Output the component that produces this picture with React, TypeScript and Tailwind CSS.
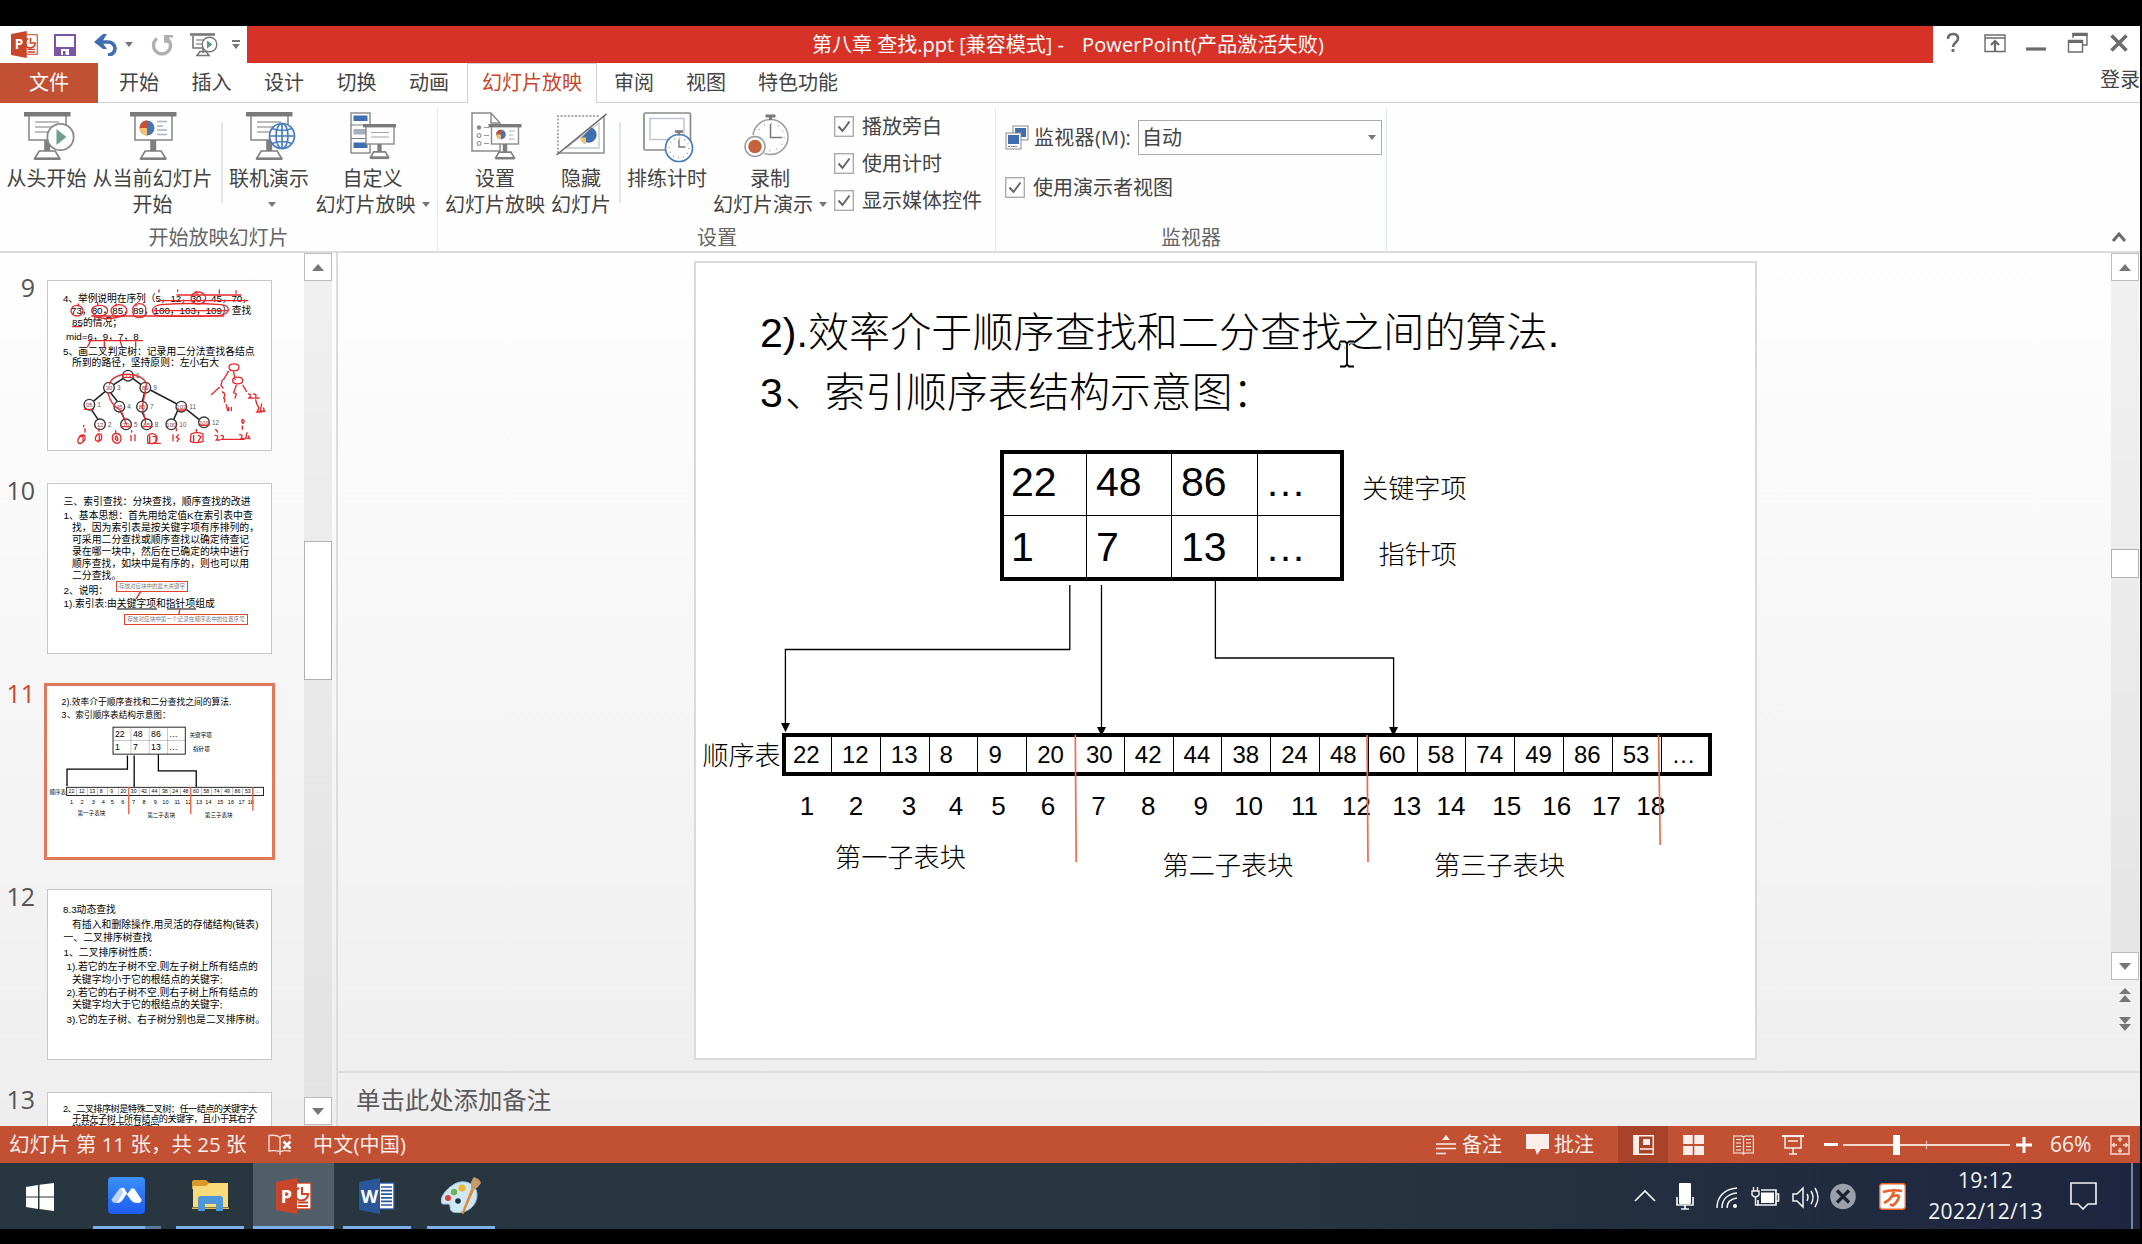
import React from "react";

const UI = "font-['Open_Sans','Noto_Sans_CJK_SC',sans-serif]";
const SLIDE = "font-['Liberation_Sans','Noto_Sans_CJK_SC',sans-serif]";

/* ---------- shared icon pieces ---------- */

function OfficeLogo({ kind, className }: { kind: "P" | "W"; className: string }) {
  const c = kind === "P" ? "#c8472a" : "#2b579a";
  return (
    <svg viewBox="0 0 36 36" preserveAspectRatio="none" className={className}>
      <rect x="18" y="5" width="17" height="26" fill="#fff" stroke={c} strokeWidth="1.4" />
      {kind === "P" ? (
        <g fill="none" stroke={c}>
          <path d="M26 9v7h6a6.500 6.500 0 1 1-9-6" strokeWidth="2.200" />
          <path d="M22 24.500h10M22 28h10" strokeWidth="1.800" />
        </g>
      ) : (
        <path d="M22 9h11M22 12.600h11M22 16.200h11M22 19.800h11M22 23.400h11M22 27h11" stroke={c} strokeWidth="1.700" />
      )}
      <path d="M0 4 21 0v36L0 32z" fill={c} />
      <text x="10.500" y="24.500" textAnchor="middle" fontSize="18" fontWeight="700" fill="#fff" fontFamily="Open Sans">
        {kind}
      </text>
    </svg>
  );
}

function Stand({ cx, y, s = 1 }: { cx: number; y: number; s?: number }) {
  return (
    <g>
      <rect x={cx - 3 * s} y={y} width={6 * s} height={11 * s} fill="#7f7f7f" />
      <path
        d={`M${cx - 8 * s} ${y + 11 * s}h${16 * s}l${4.500 * s} ${7.500 * s}h${-25 * s}z`}
        fill="#fff"
        stroke="#7f7f7f"
        strokeWidth="1.600"
      />
      <rect x={cx - 13 * s} y={y + 17.500 * s} width={26 * s} height="2.500" fill="#7f7f7f" />
    </g>
  );
}

function Board({ x, lines = true }: { x: number; lines?: boolean }) {
  return (
    <g>
      <rect x={x + 5} y="6" width="37" height="25" fill="#fff" stroke="#8a8a8a" strokeWidth="1.600" />
      <rect x={x} y="3" width="46.500" height="4.500" fill="#7a7a7a" />
      <Stand cx={x + 23.200} y={31} />
      {lines && <path d={`M${x + 11} 13h24M${x + 11} 18h20M${x + 11} 23h14`} stroke="#a6a6a6" strokeWidth="1.300" />}
    </g>
  );
}

function Pie({ cx, cy, r }: { cx: number; cy: number; r: number }) {
  return (
    <g>
      <circle cx={cx} cy={cy} r={r} fill="#4a74b4" />
      <path d={`M${cx} ${cy}V${cy - r}A${r} ${r} 0 0 0 ${cx - r} ${cy}z`} fill="#c8502f" />
      <path d={`M${cx} ${cy}H${cx - r}A${r} ${r} 0 0 0 ${cx} ${cy + r}z`} fill="#f0c36d" />
    </g>
  );
}

function RibbonIcon({ children }: { children: React.ReactNode }) {
  return (
    <svg viewBox="0 0 56 56" className="h-[56px] w-[56px] shrink-0">
      {children}
    </svg>
  );
}

const icons: Record<string, React.ReactNode> = {
  start: (
    <RibbonIcon>
      <Board x={5} />
      <circle cx="41.500" cy="28" r="13.200" fill="#fff" stroke="#8a8a8a" strokeWidth="1.800" />
      <path d="M37.500 20v16l10-8z" fill="#6fa08c" />
    </RibbonIcon>
  ),
  current: (
    <RibbonIcon>
      <Board x={5} lines={false} />
      <Pie cx={22} cy={19} r={7.500} />
      <path d="M32 12.500h10M32 17h6M32 21h10M32 25.500h10" stroke="#a9b3c2" strokeWidth="1.300" />
    </RibbonIcon>
  ),
  online: (
    <RibbonIcon>
      <Board x={5} />
      <g fill="#fff" stroke="#4a7cc0" strokeWidth="1.700">
        <circle cx="41" cy="27" r="12.500" />
        <ellipse cx="41" cy="27" rx="6" ry="12.500" fill="none" />
        <path d="M28.500 27h25M41 14.500v25M31 19.500q10 4 20 0M31 34.500q10-4 20 0" fill="none" />
      </g>
    </RibbonIcon>
  ),
  custom: (
    <RibbonIcon>
      <rect x="6" y="4" width="19" height="40" fill="#fff" stroke="#7f7f7f" strokeWidth="1.300" />
      <rect x="8.500" y="6.500" width="14" height="5.500" fill="#3f6fae" />
      <rect x="8.500" y="20" width="14" height="5.500" fill="#a7afb8" />
      <rect x="8.500" y="33.500" width="14" height="5.500" fill="#3f6fae" />
      <path d="M6 16h19M6 29.500h19" stroke="#7f7f7f" />
      <rect x="21" y="17" width="28" height="18" fill="#fff" stroke="#8a8a8a" strokeWidth="1.400" />
      <rect x="18" y="15" width="33" height="3.400" fill="#7a7a7a" />
      <path d="M26 23.500h18M26 28h18" stroke="#a6a6a6" strokeWidth="1.200" />
      <Stand cx={34.500} y={35} s={0.72} />
    </RibbonIcon>
  ),
  setup: (
    <RibbonIcon>
      <path d="M5 4h19l9 10v28H5z" fill="#fff" stroke="#8a8a8a" strokeWidth="1.500" />
      <path d="M24 4v10h9" fill="none" stroke="#8a8a8a" strokeWidth="1.500" />
      <circle cx="12" cy="18.500" r="2.200" fill="#8a8a8a" />
      <g fill="none" stroke="#9a9a9a" strokeWidth="1.200">
        <circle cx="12" cy="26.500" r="1.900" />
        <circle cx="12" cy="34.500" r="1.900" />
        <path d="M17 18.500h5M17 26.500h5M17 34.500h5" />
      </g>
      <rect x="24.500" y="17" width="27" height="18" fill="#fff" stroke="#8a8a8a" strokeWidth="1.400" />
      <rect x="21.500" y="15" width="33" height="3.400" fill="#7a7a7a" />
      <Pie cx={34} cy={25.500} r={4.800} />
      <path d="M42 22h6M42 26h4M42 30h6" stroke="#a9b3c2" strokeWidth="1.200" />
      <Stand cx={38} y={35} s={0.74} />
    </RibbonIcon>
  ),
  hide: (
    <RibbonIcon>
      <path d="M51 7v37H5" fill="none" stroke="#8f8f8f" strokeWidth="1.500" />
      <path d="M5 44V7h42" fill="none" stroke="#8a8a8a" strokeWidth="1.400" strokeDasharray="2 1.600" />
      <path d="M46 14v25H13z" fill="#fff" stroke="#c4c9d2" strokeWidth="1.300" />
      <path d="M38.500 18.500a7.800 7.800 0 1 1-10 10z" fill="#3f6fae" />
      <path d="M27 28.500h6v7q-5-1.500-6-7z" fill="#f0c36d" />
      <path d="M3.500 46 53.500 5" stroke="#666" strokeWidth="1.600" />
    </RibbonIcon>
  ),
  rehearse: (
    <RibbonIcon>
      <rect x="5" y="4" width="46.500" height="37" rx="1.500" fill="#fff" stroke="#8a8a8a" strokeWidth="1.700" />
      <rect x="11" y="9.500" width="34" height="21" fill="#fff" stroke="#b9c3d2" strokeWidth="1.400" />
      <circle cx="40" cy="39" r="13.500" fill="#fff" stroke="#4a7cc0" strokeWidth="1.700" />
      <circle cx="40" cy="39" r="9.800" fill="none" stroke="#9a9a9a" strokeWidth="1.400" strokeDasharray="1 4.130" />
      <path d="M40 30.500V38h6.500" fill="none" stroke="#7a7a7a" strokeWidth="1.400" />
      <path d="M36 22.500h8M40 22.500v4" stroke="#7a7a7a" strokeWidth="2.600" />
    </RibbonIcon>
  ),
  record: (
    <RibbonIcon>
      <circle cx="28.500" cy="28" r="17.500" fill="#fff" stroke="#a0a0a0" strokeWidth="1.600" />
      <circle cx="28.500" cy="28" r="13.500" fill="none" stroke="#9a9a9a" strokeWidth="1.400" strokeDasharray="1 6.070" />
      <path d="M28.500 15v13.500H40" fill="none" stroke="#7a7a7a" strokeWidth="1.500" />
      <path d="M23.500 7h10M28.500 7v4" stroke="#7a7a7a" strokeWidth="3" />
      <circle cx="13" cy="37.500" r="11.500" fill="#fff" />
      <circle cx="13" cy="37.500" r="10" fill="#fff" stroke="#9a9a9a" strokeWidth="1.500" />
      <circle cx="13" cy="37.500" r="6.800" fill="#c4623f" />
    </RibbonIcon>
  ),
};

function Caret({ className = "" }: { className?: string }) {
  return <span className={`h-0 w-0 border-x-[4px] border-t-[5px] border-x-transparent border-t-[#777] ${className}`} />;
}

function BigButton({ icon, l1, l2, caret, className }: { icon: string; l1: string; l2?: string; caret?: boolean; className: string }) {
  return (
    <div className={`flex shrink-0 flex-col items-center pt-[1px] text-[20px] leading-[25px] whitespace-nowrap text-[#444] ${className}`}>
      {icons[icon]}
      <span className="mt-[1px]">{l1}</span>
      <span className="mt-[1px] flex h-[25px] items-center gap-[6px]">
        {l2}
        {caret && <Caret className={l2 ? "" : "ml-[6px]"} />}
      </span>
    </div>
  );
}

function Check({ label, className = "" }: { label: string; className?: string }) {
  return (
    <div className={`flex h-[37px] items-center gap-[8px] text-[20px] whitespace-nowrap text-[#444] ${className}`}>
      <svg viewBox="0 0 20 21" className="h-[21px] w-[20px]">
        <rect x=".7" y=".7" width="18.600" height="19.600" fill="#fff" stroke="#ababab" strokeWidth="1.400" />
        <path d="M4.500 10.500 8.500 15 15.500 5.500" fill="none" stroke="#666" strokeWidth="2" />
      </svg>
      {label}
    </div>
  );
}

/* ---------- title bar, tabs, ribbon ---------- */

function TitleBar() {
  return (
    <div className="flex h-[37px] shrink-0 bg-white">
      <div className="flex w-[247px] items-center pl-[11px]">
        <OfficeLogo kind="P" className="h-[27px] w-[27px]" />
        <svg viewBox="0 0 22 22" className="ml-[16px] h-[22px] w-[22px]">
          <rect x="1" y="1" width="20" height="20" fill="#fff" stroke="#7d55a8" strokeWidth="2" />
          <path d="M1 13h20v8H1z" fill="#7d55a8" />
          <path d="M7 15h8v6H7z" fill="#fff" />
          <path d="M9 17h2.500v4H9z" fill="#7d55a8" />
        </svg>
        <svg viewBox="0 0 24 22" className="ml-[18px] h-[22px] w-[24px]">
          <path d="M3 8h11a7 6.500 0 0 1 0 13" fill="none" stroke="#3f6fae" strokeWidth="3.600" />
          <path d="M0 8 9 0h4L8 8l5 7H9z" fill="#3f6fae" />
        </svg>
        <Caret className="ml-[7px]" />
        <svg viewBox="0 0 24 24" className="ml-[17px] h-[24px] w-[24px]">
          <path d="M7 5.500a8.500 8.500 0 1 0 10 0" fill="none" stroke="#b0b0b0" strokeWidth="3.400" />
          <path d="M14 2h9v2.500h-4l1 6-6-1z" fill="#b0b0b0" />
        </svg>
        <svg viewBox="0 0 28 24" className="ml-[16px] h-[24px] w-[28px]">
          <path d="M0 1.500h25" stroke="#777" strokeWidth="2.600" />
          <path d="M3 3v12h10M13 15v5M7 22.500h12l-3-4h-6z" fill="none" stroke="#777" strokeWidth="1.600" />
          <path d="M6 7h10M6 11h6" stroke="#999" strokeWidth="1.300" />
          <circle cx="19.500" cy="11.500" r="7.300" fill="#fff" stroke="#777" strokeWidth="1.400" />
          <path d="M17 7.500v8l5.500-4z" fill="#5a9a80" />
        </svg>
        <span className="ml-[14px] flex flex-col items-center gap-[2px]">
          <span className="h-[2px] w-[8px] bg-[#777]" />
          <Caret />
        </span>
      </div>
      <div className="flex w-[1686px] items-center bg-[#d73227] pl-[565px] text-[20px] whitespace-pre text-white">
        <span>第八章 查找.ppt [兼容模式] -</span>
        <span className="ml-[18px] tracking-[0.150px]">PowerPoint(产品激活失败)</span>
      </div>
      <svg viewBox="0 0 207 37" className="h-[37px] w-[207px]">
        <g fill="none" stroke="#6b6b6b">
          <path d="M15 13q0-5 5-5t5 4.500c0 4-5 4-5 8.500" strokeWidth="2.600" />
          <path d="M20 23v3" strokeWidth="2.800" />
          <path d="M52 9h20v16.500H52zM52 12h20" strokeWidth="1.400" />
          <path d="M62 25V15M58 19l4-4 4 4" strokeWidth="2.200" />
          <path d="M93 23h20" strokeWidth="3.200" />
          <path d="M140 12V7.500h14V19h-4" strokeWidth="1.400" />
          <path d="M139.500 8.500h15" strokeWidth="3" />
          <path d="M135.500 14.500h14V26h-14z" strokeWidth="1.400" />
          <path d="M135 15.500h15" strokeWidth="3" />
          <path d="M178.500 9.500l15 15M193.500 9.500l-15 15" strokeWidth="3.600" />
        </g>
      </svg>
    </div>
  );
}

function Tabs() {
  return (
    <div className="flex h-[40px] shrink-0 border-b border-[#d2d2d2] bg-white text-[20px] leading-[40px] whitespace-nowrap text-[#444]">
      <div className="h-[40px] w-[98px] bg-[#c25033] text-center text-white">文件</div>
      <div className="ml-[21px] flex gap-[32.500px]">
        <span>开始</span>
        <span>插入</span>
        <span>设计</span>
        <span>切换</span>
        <span>动画</span>
      </div>
      <div className="ml-[18px] h-[40px] w-[130px] border-x border-t border-[#d2d2d2] bg-white text-center leading-[38px] text-[#c8472a]">幻灯片放映</div>
      <div className="ml-[17px] flex gap-[32px]">
        <span>审阅</span>
        <span>视图</span>
        <span>特色功能</span>
      </div>
      <span className="ml-auto leading-[33px]">登录</span>
    </div>
  );
}

function Group({ label, className, children }: { label: string; className: string; children: React.ReactNode }) {
  return (
    <div className={`relative flex h-[143px] shrink-0 flex-col border-r border-[#e1e6ee] ${className}`}>
      <div className="flex h-[116px]">{children}</div>
      <div className="h-[27px] text-center text-[20px] leading-[27px] text-[#666]">{label}</div>
    </div>
  );
}

function Ribbon() {
  return (
    <div className="flex h-[150px] shrink-0 border-b-2 border-[#dcdcdc] bg-[#fefefe] pt-[5px]">
      <Group label="开始放映幻灯片" className="w-[438px]">
        <BigButton icon="start" l1="从头开始" className="ml-[6px] w-[81px]" />
        <BigButton icon="current" l1="从当前幻灯片" l2="开始" className="ml-[5px] w-[121px]" />
        <div className="mt-[14px] ml-[8px] h-[81px] w-[2px] bg-[#e1e6ee]" />
        <BigButton icon="online" l1="联机演示" caret className="ml-[6px] w-[80px]" />
        <BigButton icon="custom" l1="自定义" l2="幻灯片放映" caret className="ml-[7px] w-[113px]" />
      </Group>
      <Group label="" className="w-[558px]">
        <BigButton icon="setup" l1="设置" l2="幻灯片放映" className="ml-[7px] w-[100px]" />
        <BigButton icon="hide" l1="隐藏" l2="幻灯片" className="ml-[6px] w-[60px]" />
        <div className="mt-[14px] ml-[8px] h-[81px] w-[2px] bg-[#e1e6ee]" />
        <BigButton icon="rehearse" l1="排练计时" className="ml-[6px] w-[80px]" />
        <BigButton icon="record" l1="录制" l2="幻灯片演示" caret className="ml-[6px] w-[114px]" />
        <div className="ml-[7px] flex flex-col">
          <Check label="播放旁白" />
          <Check label="使用计时" />
          <Check label="显示媒体控件" />
        </div>
        <span className="absolute bottom-0 left-[259px] text-[20px] leading-[27px] text-[#666]">设置</span>
      </Group>
      <Group label="监视器" className="w-[391px]">
        <div className="flex flex-col pl-[9px] text-[20px] text-[#444]">
          <div className="mt-[11px] flex h-[37px] items-center">
            <svg viewBox="0 0 24 25" className="h-[25px] w-[24px]">
              <rect x="8" y="1" width="15" height="14" fill="#fff" stroke="#8a8a8a" />
              <rect x="10" y="3" width="11" height="9" fill="#3f6fae" />
              <rect x="1" y="8" width="15" height="16" fill="#fff" stroke="#8a8a8a" />
              <rect x="3" y="10" width="11" height="9" fill="#3f6fae" />
              <path d="M3 21.500h2" stroke="#c8472a" />
              <path d="M6 21.500h6" stroke="#888" />
            </svg>
            <span className="ml-[5px] w-[104px] tracking-[0.300px] whitespace-nowrap">监视器(M):</span>
            <div className="flex h-[35px] w-[244px] items-center justify-between border border-[#ababab] bg-white pr-[5px] pl-[3px]">
              自动
              <Caret />
            </div>
          </div>
          <Check label="使用演示者视图" className="mt-[13px]" />
        </div>
      </Group>
      <svg viewBox="0 0 16 12" className="mt-[123px] mr-[13px] ml-auto h-[12px] w-[16px]">
        <path d="M2 10l6-7 6 7" fill="none" stroke="#6b6b6b" strokeWidth="3" />
      </svg>
    </div>
  );
}

/* ---------- slides ---------- */

type Item = { x: number; y: number; s: number; t: string; ls?: number };

/* Places one run of slide text; y is the vertical centre of the run. */
function Run({ x, y, s, t, ls = 0 }: Item) {
  return (
    <span
      className="absolute leading-none whitespace-pre"
      style={{ left: x, top: y - s / 2, fontSize: s, letterSpacing: ls }}
    >
      {t}
    </span>
  );
}

const seq = ["22", "12", "13", "8", "9", "20", "30", "42", "44", "38", "24", "48", "60", "58", "74", "49", "86", "53", "…"];
const idx = [111, 160, 213, 260, 302.5, 352, 402.4, 452.3, 504.7, 552.6, 608.6, 660.4, 710.8, 755, 810.8, 860.8, 910.4, 954.7];
const labels: Item[] = [
  { x: 666, y: 226, s: 26.2, t: "关键字项" },
  { x: 682.5, y: 292.5, s: 26.2, t: "指针项" },
  { x: 6.5, y: 493, s: 26, t: "顺序表" },
  { x: 139, y: 595.5, s: 26.2, t: "第一子表块" },
  { x: 466.5, y: 603.5, s: 26.2, t: "第二子表块" },
  { x: 738, y: 603.5, s: 26.2, t: "第三子表块" },
];

function IndexSlide({ heavy }: { heavy?: boolean }) {
  const w = heavy ? 6 : 1.3;
  return (
    <div className={`relative h-[796px] w-[1060px] bg-white text-black ${heavy ? "font-normal" : "font-light"} ${SLIDE}`}>
      <Run x={64} y={70.500} s={41} t="2)." />
      <Run x={112} y={70.500} s={41.100} t="效率介于顺序查找和二分查找之间的算法." />
      <Run x={64} y={130.500} s={41} t="3" />
      <Run x={89} y={130.500} s={40.7} t="、" />
      <Run x={128.500} y={130.500} s={40.8} t="索引顺序表结构示意图：" />

      <div className="absolute top-[187px] left-[304px] grid h-[131px] w-[344px] grid-cols-[83px_85px_86px_82px] grid-rows-[62px_61px] border-4 border-black text-[41px] leading-[57px]">
        {["22", "48", "86", "…", "1", "7", "13", "…"].map((t, i) => (
          <div
            key={i}
            className={`${i % 4 === 3 ? "pl-[7px]" : i % 4 === 0 ? "border-r-[1.500px] border-r-black pl-[7px]" : "border-r-[1.500px] border-r-black pl-[9px]"} ${i < 4 ? "border-b-[1.500px] border-b-black" : "pt-[3px]"}`}
          >
            {t}
          </div>
        ))}
      </div>

      <div className="absolute top-[470px] left-[86px] flex h-[43px] w-[930px] border-4 border-black text-[24px] leading-[36px]">
        {seq.map((t, i) => (
          <div
            key={i}
            className={i === 0 ? "w-[45px] shrink-0 pl-[7px]" : "w-[48.800px] shrink-0 border-l-[1.500px] border-black pl-[10px]"}
          >
            {t}
          </div>
        ))}
      </div>

      {idx.map((c, i) => (
        <span
          key={i}
          className="absolute top-[530px] w-[40px] text-center text-[26px] leading-[26px]"
          style={{ left: c - 20 }}
        >
          {i + 1}
        </span>
      ))}
      {labels.map((l) => (
        <Run key={l.t} {...l} />
      ))}

      <svg viewBox="0 0 1060 796" className="absolute inset-0 h-[796px] w-[1060px]">
        <g fill="none" stroke="#000" strokeWidth={w}>
          <path d="M373.800 322V386.500H89.400V462M405.500 322V466M519.400 318V395H697.600V466" />
        </g>
        <path d="M85 460h9l-4.500 9zM401 464h9l-4.500 9zM693 464h9l-4.500 9z" />
        <path d="M379.300 472l.9 127M671 472l1 127M962.600 472l1.600 110" stroke="#ee6c4d" strokeWidth={heavy ? 7 : 1.700} fill="none" />
      </svg>
    </div>
  );
}

const s9: Item[] = [
  { x: 15, y: 17.5, s: 9.8, t: "4、举例说明在序列（5，12，30，45，70，", ls: -0.12 },
  { x: 23, y: 29.5, s: 9.8, t: "73，80，85，89，100，103，109）查找", ls: -0.02 },
  { x: 24, y: 41.5, s: 9.8, t: "85的情况；" },
  { x: 18, y: 56, s: 9.8, t: "mid=6，9，7，8" },
  { x: 15, y: 70.5, s: 9.8, t: "5、画二叉判定树：记录用二分法查找各结点" },
  { x: 24, y: 81.5, s: 9.8, t: "所到的路径，坚持原则：左小右大" },
];
const s10: Item[] = [
  { x: 15.5, y: 17.5, s: 9.85, t: "三、索引查找：分块查找，顺序查找的改进" },
  { x: 15.5, y: 32, s: 9.85, t: "1、基本思想：首先用给定值K在索引表中查" },
  { x: 24, y: 44, s: 9.85, t: "找，因为索引表是按关键字项有序排列的，" },
  { x: 24, y: 55.5, s: 9.85, t: "可采用二分查找或顺序查找以确定待查记" },
  { x: 24, y: 68, s: 9.85, t: "录在哪一块中，然后在已确定的块中进行" },
  { x: 24, y: 80, s: 9.85, t: "顺序查找，如块中是有序的，则也可以用" },
  { x: 24, y: 92, s: 9.85, t: "二分查找。" },
  { x: 15.5, y: 106.5, s: 9.8, t: "2、说明：" },
  { x: 15.5, y: 120, s: 9.8, t: "1).索引表:由关键字项和指针项组成" },
];
const s12: Item[] = [
  { x: 15, y: 20, s: 9.8, t: "8.3动态查找" },
  { x: 24, y: 34.5, s: 9.85, t: "有插入和删除操作,用灵活的存储结构(链表)" },
  { x: 15.5, y: 48, s: 9.85, t: "一、二叉排序树查找" },
  { x: 15.5, y: 62.5, s: 9.85, t: "1、二叉排序树性质：" },
  { x: 18.5, y: 77, s: 9.85, t: "1).若它的左子树不空,则左子树上所有结点的" },
  { x: 24, y: 89.5, s: 9.85, t: "关键字均小于它的根结点的关键字;" },
  { x: 18.5, y: 102.5, s: 9.85, t: "2).若它的右子树不空,则右子树上所有结点的" },
  { x: 24, y: 115, s: 9.85, t: "关键字均大于它的根结点的关键字;" },
  { x: 18.5, y: 129.5, s: 9.85, t: "3).它的左子树、右子树分别也是二叉排序树。" },
];
const s13: Item[] = [
  { x: 15, y: 16.5, s: 9.2, t: "2、二叉排序树是特殊二叉树：任一结点的关键字大", ls: -0.58 },
  { x: 24, y: 26.5, s: 9.2, t: "于其左子树上所有结点的关键字，且小于其右子", ls: -0.5 },
  { x: 24, y: 36, s: 9.2, t: "树的所有结点的关键字。", ls: -0.5 },
];

const nodes: [number, number, number, string][] = [
  [381, 375, 6, "73"], [324, 411, 3, "30"], [433, 411, 9, "89"], [265, 462, 1, "05"], [355, 468, 4, "45"], [423, 468, 7, "80"],
  [541, 468, 11, "103"], [297, 521, 2, "12"], [375, 521, 5, "70"], [437, 521, 8, "85"], [511, 521, 10, "100"], [609, 515, 12, "109"],
];

function TreeInk() {
  return (
    <svg viewBox="141 91 675 510" className="absolute inset-0 h-[170px] w-[225px]">
      <path
        d="M367 383 338 402M395 383 420 402M312 423 277 452M448 418 528 460M272 478 291 506M330 428 349 452M360 484 370 505M430 428 424 452M424 486 433 505M530 480 518 506M556 476 594 506"
        stroke="#222" strokeWidth="4.500"
      />
      {nodes.map(([x, y, n, t]) => (
        <g key={n}>
          <circle cx={x} cy={y} r="16" fill="#fff" stroke="#333" strokeWidth="4" />
          <text x={x} y={y + 7} fontSize="18" textAnchor="middle" fill="#a33" fontFamily="Liberation Sans">{t}</text>
          <text x={x + 24} y={y + 7} fontSize="19" fill="#555" fontFamily="Liberation Sans">{n}</text>
        </g>
      ))}
      <g fill="none" stroke="#e8292b" strokeWidth="4" strokeLinecap="round">
        <path d="M472 150H740M272 196H668M460 180H680M215 228h26M262 270H424M528 133H720" />
        <path d="M210 180a18 16 0 1 0 36 0a18 16 0 1 0-36 0M272 180a24 16 0 1 0 48 0a24 16 0 1 0-48 0M330 180a24 18 0 1 0 48 0a24 18 0 1 0-48 0M396 180a20 16 0 1 0 38 0a20 16 0 1 0-38 0M570 142a22 18 0 1 0 44 0a22 18 0 1 0-44 0" />
        <path d="M480 162c-34 4-34 34 0 34 60 2 120 2 176-2 34-6 34-28 4-32-50-4-130-4-180 0M280 198q50 14 90-6" />
        <path d="M474 118v6M530 118v4M585 122l4 8M655 118v10M705 120v8M232 160v6M290 156v8M345 160v6M405 160v6" />
        <path d="M268 272l-8 16M310 274v14M358 272l4 14M404 274v14" />
        <path d="M326 400c10-40 100-38 110 0l-12 70 10 46M320 425q10 40 40 55l16 40M365 380h30M250 476h28M530 478h24M362 528h26M428 528h26M600 524h24" />
        <path d="M684 350c0-14 30-14 30 0s-30 14-30 0M682 362l-14 24M698 364l4 22M695 390c0-14 30-14 30 0s-30 12-30 0M664 388l-4 16 6 8M655 410l-24 22M664 424q12 4 4 18 6 2 2 12M706 404l-8 22 8 4-4 12M726 404l10 18M742 430q12 0 2 12h12M758 430q12 0 4 12h12M764 448l4 14M768 462q10 8 0 22h14M782 460l-4 20 12 2-2-10M676 462l4 18M683 470v10M691 470v10" />
        <path d="M236 556c20-12 22 12 4 22-16 4-10-22 4-22M248 524v4M252 534v10M246 556v16M290 550q10 4 2 24M284 560c-6 14 16 16 18 0s-16-12-18 0M294 534v8M334 560c0-16 26-16 26 4s-26 18-26-4M344 540v8M346 556q-8 8 2 14 6-4-2-14M392 540v4M390 554v16M402 552v18M440 556c8-12 28-8 28 8s-26 20-28 8v-16M446 556v18M456 558l10 0-2 16M440 578h38M526 534v6M516 552v18M532 552l-6 8 8 4-6 8M570 550q20-8 36 0v22q-20 8-38 0l2-22M578 554v18M592 554l8 4-8 14M586 536v8M642 554q14 0 4 14h10M660 554q12 0 4 12h12M644 536l6 8M660 566h70M716 552q12 0 4 12h10M738 546l-4 16 12 2-4-8M724 506q10 4 2 12-6-4-2-12M724 526v10" />
      </g>
    </svg>
  );
}

function Thumb({ n, children, active }: { n: number; children: React.ReactNode; active?: boolean }) {
  return (
    <div className="flex h-[170.500px] shrink-0">
      <span className={`w-[36px] shrink-0 pr-px text-right text-[25px] leading-[14px] ${active ? "text-[#c8472a]" : "text-[#555]"}`}>{n}</span>
      <div
        className={`relative ml-[11px] h-[170.500px] w-[225px] shrink-0 overflow-hidden bg-white text-black ${SLIDE} ${
          active ? "outline-3 outline-[#e0795c]" : "border border-[#c6c6c6]"
        }`}
      >
        {children}
      </div>
    </div>
  );
}

function ArrowButton({ up }: { up?: boolean }) {
  return (
    <div className="flex h-[28px] w-full shrink-0 items-center justify-center border border-[#bcbcbc] bg-white">
      {up ? (
        <span className="h-0 w-0 border-x-[6px] border-b-[7px] border-x-transparent border-b-[#777]" />
      ) : (
        <span className="h-0 w-0 border-x-[6px] border-t-[7px] border-x-transparent border-t-[#777]" />
      )}
    </div>
  );
}

function ThumbPane() {
  return (
    <div className="flex w-[338px] shrink-0 border-r-2 border-[#dcdcdc]">
      <div className="flex w-[304px] flex-col gap-[32.500px] overflow-hidden pt-[27px]">
        <Thumb n={9}>
          {s9.map((l) => <Run key={l.t} {...l} />)}
          <TreeInk />
        </Thumb>
        <Thumb n={10}>
          {s10.map((l) => <Run key={l.t} {...l} />)}
          <svg viewBox="0 0 225 170" className="absolute inset-0 h-[170px] w-[225px]">
            <path d="M69 125h40M119 125h29" stroke="#000" />
            <path d="M93 107l-5 8M132 124l-1 6" stroke="#e0452f" strokeWidth="1.500" />
          </svg>
          <div className="absolute top-[97px] left-[68px] flex h-[11px] w-[72px] items-center justify-center border border-[#e0452f] text-[5.500px] whitespace-nowrap text-[#777]">
            存放对应块中的最大关键字
          </div>
          <div className="absolute top-[130px] left-[76px] flex h-[11px] w-[124px] items-center justify-center border border-[#e0452f] text-[5.600px] whitespace-nowrap text-[#777]">
            存放对应块中第一个记录在顺序表中的位置序号
          </div>
        </Thumb>
        <Thumb n={11} active>
          <div className="mt-px ml-px h-[796px] w-[1060px] origin-top-left scale-[0.2125]">
            <IndexSlide heavy />
          </div>
        </Thumb>
        <Thumb n={12}>{s12.map((l) => <Run key={l.t} {...l} />)}</Thumb>
        <Thumb n={13}>{s13.map((l) => <Run key={l.t} {...l} />)}</Thumb>
      </div>
      <div className="flex w-[28px] flex-col justify-between bg-gradient-to-b from-[#f0f0f0] to-[#e2e2e2] pb-px">
        <ArrowButton up />
        <div className="mb-[157px] h-[139px] border border-[#b0b0b0] bg-white" />
        <ArrowButton />
      </div>
    </div>
  );
}

function Editor() {
  return (
    <div className="flex min-w-0 flex-1 flex-col">
      <div className="flex h-[818px] shrink-0">
        <div className="relative flex-1 pt-[8px] pl-[356px]">
          <div className="h-[799px] w-[1063px] overflow-hidden border-2 border-[#dadada]">
            <IndexSlide />
          </div>
          <svg viewBox="0 0 16 28" className="absolute top-[87px] left-[1001px] h-[28px] w-[16px]">
            <path d="M1 1.500h5l2 2 2-2h5M8 3v22M1 26.500h5l2-2 2 2h5" fill="none" stroke="#fff" strokeWidth="4" />
            <path d="M1 1.500h5l2 2 2-2h5M8 3v22M1 26.500h5l2-2 2 2h5" fill="none" stroke="#000" strokeWidth="1.800" />
          </svg>
        </div>
        <div className="mr-px flex w-[28px] flex-col">
          <div className="flex h-[699px] flex-col bg-gradient-to-b from-[#f1f1f1] to-[#e5e5e5]">
            <ArrowButton up />
            <div className="mt-[268px] h-[29px] border border-[#b0b0b0] bg-white" />
          </div>
          <ArrowButton />
          <svg viewBox="0 0 28 60" className="h-[60px] w-[28px]" fill="#777">
            <path d="M14 8l6 6H8zM14 15l6 7H8zM8 37h12l-6 7zM8 44h12l-6 7z" />
          </svg>
        </div>
      </div>
      <div className="flex-1 border-t-2 border-[#dcdcdc] pl-[18px] text-[24.400px] leading-[53px] text-[#595959]">单击此处添加备注</div>
    </div>
  );
}

/* ---------- status bar & taskbar ---------- */

function StatusBar() {
  return (
    <div className="flex h-[37px] shrink-0 items-center bg-[#c25033] pl-[9px] text-[20px] whitespace-nowrap text-[#fbeeea]">
      <span className="w-[259px] text-[20.500px]">幻灯片 第 11 张，共 25 张</span>
      <svg viewBox="0 0 24 21" className="h-[21px] w-[24px]">
        <path d="M12 18q-3-2-11-1V1.500q8-1 11 2 3-3 10-2V5M12 3.500V21M22 16v1q-6-1-10 1" fill="none" stroke="#f7d9d0" strokeWidth="1.400" />
        <path d="M15.500 7.500l7 7M22.500 7.500l-7 7" stroke="#fff" strokeWidth="2.600" />
      </svg>
      <span className="ml-[21px] tracking-[0.200px]">中文(中国)</span>
      <svg viewBox="0 0 20 20" className="ml-auto h-[20px] w-[20px]" stroke="#fbeeea" strokeWidth="1.600">
        <path d="M0 9h20M0 13.500h20M0 18.500h10" />
        <path d="M10 0l4 5H6z" fill="#fbeeea" stroke="none" />
      </svg>
      <span className="ml-[6px]">备注</span>
      <svg viewBox="0 0 23 21" className="ml-[24px] h-[21px] w-[23px]" fill="#fbeeea">
        <path d="M0 0h23v15h-8l-4 6-2-6H0z" />
      </svg>
      <span className="ml-[5px]">批注</span>
      <div className="ml-[24px] flex h-[37px] w-[50px] items-center justify-center bg-[#a84228]">
        <svg viewBox="0 0 21 20" className="h-[20px] w-[21px]">
          <path d="M.7.700h19.600v18.600H.7zM7 14h13" fill="none" stroke="#fbeeea" strokeWidth="1.500" />
          <path d="M0 0h6v20H0zM10 4h7v6h-7z" fill="#fbeeea" />
        </svg>
      </div>
      <svg viewBox="0 0 21 20" className="ml-[15px] h-[20px] w-[21px]" fill="#fbeeea">
        <path d="M0 0h9.700v9H0zM11.300 0H21v9h-9.700zM0 11h9.700v9H0zM11.300 11H21v9h-9.700z" />
      </svg>
      <svg viewBox="0 0 21 20" className="ml-[29px] h-[20px] w-[21px]" fill="none" stroke="#fbeeea" strokeWidth="1.200">
        <path d="M.6 1H9l1.500 1L12 1h8.400v17H12l-1.500 1L9 18H.6zM10.500 2v18" />
        <path d="M3 4.500h5M3 8h5M3 11.500h5M3 15h5M13 4.500h5M13 8h5M13 11.500h5M13 15h5" />
      </svg>
      <svg viewBox="0 0 22 20" className="ml-[28px] h-[20px] w-[22px]" fill="none" stroke="#fbeeea" strokeWidth="1.500">
        <path d="M0 1h22" strokeWidth="2.200" />
        <path d="M3 1v12h16V1M6 6h10M11 13v6M7 19h8" />
      </svg>
      <span className="ml-[20px] h-[3px] w-[14px] bg-[#fff]" />
      <div className="relative ml-[5px] h-[20px] w-[167px]">
        <div className="mt-[9px] h-[2px] bg-[#f7d9d0]" />
        <div className="absolute top-0 left-[50px] h-[20px] w-[7px] bg-white" />
        <div className="absolute top-[6px] left-[83px] h-[8px] w-px bg-[#f7d9d0]" />
      </div>
      <svg viewBox="0 0 16 16" className="ml-[6px] h-[16px] w-[16px]" stroke="#fff" strokeWidth="3">
        <path d="M0 8h16M8 0v16" />
      </svg>
      <span className="ml-[18px] w-[60px] text-[21px]">66%</span>
      <svg viewBox="0 0 20 20" className="mr-[10px] h-[20px] w-[20px]" fill="none" stroke="#f7d9d0" strokeWidth="1.400">
        <path d="M1 1h18v18H1zM10 2v5M10 13v5M2 10h5M13 10h5M8 5l2-2 2 2M8 15l2 2 2-2M4.500 8l-2 2 2 2M15.500 8l2 2-2 2" />
      </svg>
    </div>
  );
}

function Task({ className, bar, children }: { className: string; bar: string; children: React.ReactNode }) {
  return (
    <div className={`flex h-[66px] shrink-0 flex-col items-center ${className}`}>
      <div className="flex flex-1 items-center pt-[2px]">{children}</div>
      <div className={`h-[3px] ${bar}`} />
    </div>
  );
}

function Taskbar() {
  return (
    <div className="flex h-[66px] shrink-0 bg-gradient-to-r from-[#28373f] via-[#27363f] via-60% to-[#1e2540]">
      <svg viewBox="0 0 28 28" className="mt-[20px] ml-[26px] h-[28px] w-[28px]" fill="#fff">
        <path d="M0 4l12-2v11.400H0zM13.500 1.700 28 0v13.400H13.500zM0 14.600h12V26L0 24zM13.500 14.600H28V28l-14.500-2z" />
      </svg>
      <Task className="ml-[39px] w-[68px]" bar="w-[68px] bg-gradient-to-r from-[#7db0ea] from-77% to-[#56789a] to-77%">
        <svg viewBox="0 0 37 37" className="mr-[2px] h-[37px] w-[37px]">
          <defs>
            <linearGradient id="meet" x2="0" y2="1">
              <stop stopColor="#3a90f8" />
              <stop offset="1" stopColor="#1f5cf0" />
            </linearGradient>
          </defs>
          <rect width="37" height="37" rx="4" fill="url(#meet)" />
          <path d="M3.500 22.500 11.500 11.500q2-1.500 3.500 0l3 4-6 9q-1.500 1.500-3.500 1.500-4.500 0-5-3.500z" fill="#b9d4ff" />
          <path d="M9 26q3.500 0 5.500-3l4-6 4 5.500q2.500 3.500 7 3.500 4.500 0 4-3.500L26.500 12q-2-1.500-3.500 0l-3.500 5-3-5.500q-1.500-1.500-3.500 0l2 4z" fill="#fff" />
        </svg>
      </Task>
      <Task className="ml-[15px] w-[68px]" bar="w-[68px] bg-[#7db0ea]">
        <svg viewBox="0 0 37 31" className="h-[31px] w-[37px]">
          <path d="M0 2q0-2 2-2h12l3 3v6H0z" fill="#d9992b" />
          <path d="M1 6h13l3-3h19v24H1z" fill="#fadb7a" />
          <path d="M0 27.500h37V29H0z" fill="#e8bb4b" />
          <path d="M6 31V19q0-3 3-3h19q3 0 3 3v12h-7v-7H13v7z" fill="#4f97d8" />
        </svg>
      </Task>
      <Task className="ml-[9px] w-[81px] bg-[#516068]" bar="w-[81px] bg-[#7db0ea]">
        <OfficeLogo kind="P" className="h-[36px] w-[36px]" />
      </Task>
      <Task className="ml-[9px] w-[68px]" bar="w-[68px] bg-[#7db0ea]">
        <OfficeLogo kind="W" className="h-[36px] w-[36px]" />
      </Task>
      <Task className="ml-[16px] w-[68px]" bar="w-[68px] bg-[#7db0ea]">
        <svg viewBox="0 0 40 38" className="h-[38px] w-[40px]">
          <path d="M12 8C22 1 36 6 36 18s-12 20-24 17c-5-2-1-8-5-8S0 28 0 24 4 13 12 8z" fill="#cfe6f3" stroke="#9cc3da" />
          <circle cx="7" cy="21" r="3" fill="#d9433f" />
          <circle cx="13" cy="15" r="3.200" fill="#6fb554" />
          <circle cx="21" cy="11" r="3.600" fill="#f2b62e" />
          <circle cx="17" cy="24" r="2.800" fill="#22313a" />
          <path d="M30 12l3 1-10 23q-2 3-2-1z" fill="#e08a35" />
          <path d="M30 12q-1-8 3-12 6 2 7 6-3 5-7 7z" fill="#c79a6b" />
        </svg>
      </Task>
      <div className="flex-1" />
      <svg viewBox="0 0 231 66" className="h-[66px] w-[231px]" fill="none" stroke="#f2f4f6" strokeWidth="1.700">
        <path d="M1 38l10-10 10 10" />
        <rect x="45" y="20" width="12" height="21" rx="1" fill="#fff" stroke="none" />
        <path d="M43 34v8h16v-8M51 42v4M47 46h8" />
        <path d="M83 45c0-11 7-19 20-20M88 45c0-8 5-14 15-15M93 45c0-5 3-9 10-10" strokeWidth="1.500" />
        <circle cx="101" cy="43" r="2" fill="#fff" stroke="none" />
        <path d="M127 27h15v15h-18v-5M142 31h2.500v7H142" />
        <rect x="127" y="29.500" width="13" height="10.500" fill="#fff" stroke="none" />
        <path d="M118 28h7v4q-3.500 4-7 0zM119.500 28v-4M123.500 28v-4M121.500 34v8h3" strokeWidth="1.400" />
        <path d="M159 31h4l6-6v19l-6-6h-4zM173 31q2 3 0 7M177 28q4 6.500 0 13M181 25q6 9.500 0 19" strokeWidth="1.500" />
        <circle cx="209" cy="33.500" r="12.800" fill="#9a9fab" stroke="none" />
        <path d="M203 27.500l12 12M215 27.500l-12 12" stroke="#1b2331" strokeWidth="3.200" />
      </svg>
      <svg viewBox="0 0 27 27" className="mt-[20px] ml-[14px] h-[27px] w-[27px]">
        <rect x=".7" y=".7" width="25.600" height="25.600" rx="2.500" fill="#fff" stroke="#e8622c" strokeWidth="1.400" />
        <path d="M4 9q9-3 19-1M15 8.500Q12 17 5 20M11 14.500q8-4 9-1-1 5-6 9l-3-1" fill="none" stroke="#e8622c" strokeWidth="2.600" />
      </svg>
      <div className="ml-[13px] flex w-[133px] flex-col items-center pt-[2px] text-[21px] leading-[31px] tracking-[0.300px] text-[#f2f4f6]">
        <span>19:12</span>
        <span>2022/12/13</span>
      </div>
      <svg viewBox="0 0 27 28" className="mt-[19px] ml-[18px] h-[28px] w-[27px]" fill="none" stroke="#f2f4f6" strokeWidth="1.600">
        <path d="M1 1h25v21h-8l-5 5-5-5H1z" />
      </svg>
      <div className="mr-[7px] ml-[34px] w-[2px] bg-[#7d8494]" />
    </div>
  );
}

export default function App() {
  return (
    <div className={`flex h-[1244px] w-[2142px] flex-col overflow-hidden bg-black pt-[26px] ${UI}`}>
      <div className="flex h-[1203px] w-[2140px] flex-col">
        <TitleBar />
        <Tabs />
        <Ribbon />
        <div className="flex h-[873px] shrink-0 bg-gradient-to-b from-[#fefefe] to-[#eeeeee]">
          <ThumbPane />
          <Editor />
        </div>
        <StatusBar />
        <Taskbar />
      </div>
    </div>
  );
}
